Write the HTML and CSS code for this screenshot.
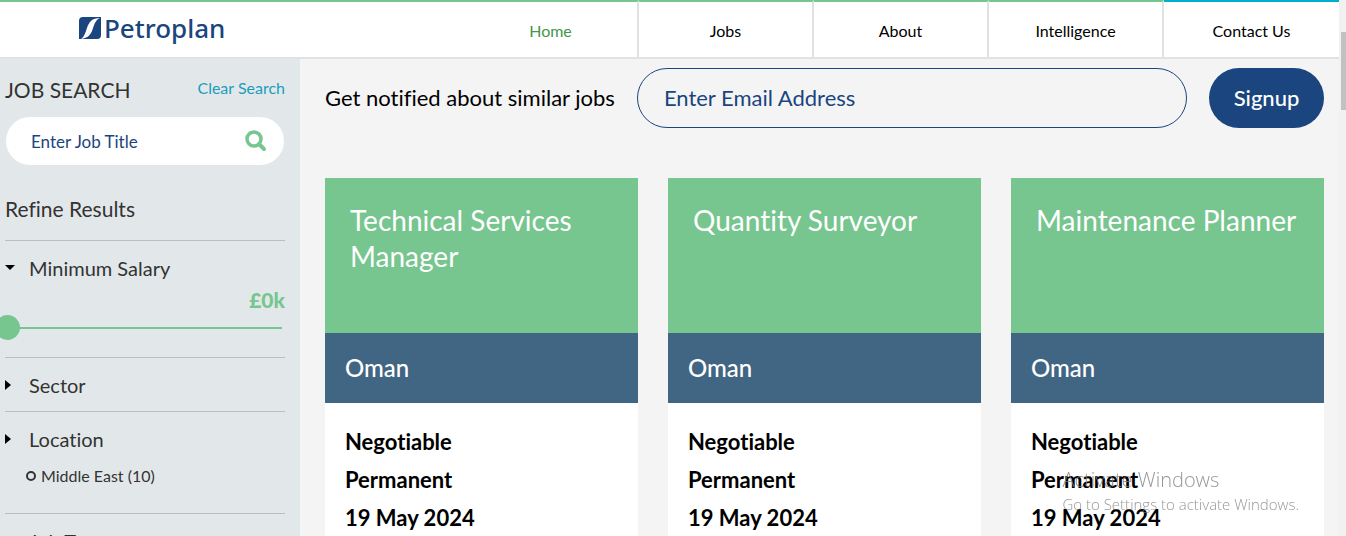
FILE: index.html
```html
<!DOCTYPE html>
<html lang="en">
<head>
    <meta charset="UTF-8">
    <meta name="viewport" content="width=device-width, initial-scale=1.0">
    <title>Petroplan - Jobs</title>
    <link rel="stylesheet" href="styles.css">
</head>
<body>
    <div class="page">
        <header>
            <a href="#" class="logo">
                <svg width="22" height="22" viewBox="0 0 22 22" aria-hidden="true">
                    <path fill="#1a457e" d="M4 0H22V18Q22 22 18 22H0V4Q0 0 4 0Z"/>
                    <path fill="#fff" d="M21 1C13 1 10 5 8 11C6 17 5 20 2 22C9 21 12 18 14 11C16 5 18 2 21 1Z"/>
                </svg>
                <span>Petroplan</span>
            </a>
            <nav class="nav-bar">
                <a href="#" class="active">Home</a>
                <a href="#">Jobs</a>
                <a href="#">About</a>
                <a href="#">Intelligence</a>
                <a href="#" class="contact">Contact Us</a>
            </nav>
        </header>

        <div class="content">
            <aside class="sidebar">
                <div class="search-head">
                    <h2>JOB SEARCH</h2>
                    <a href="#">Clear Search</a>
                </div>
                <form class="search-box">
                    <input type="text" placeholder="Enter Job Title" aria-label="Enter Job Title">
                    <button type="button" aria-label="Search">
                        <svg width="22" height="22" viewBox="0 0 22 22" fill="none" stroke="#77c58f">
                            <circle cx="9" cy="9" r="7" stroke-width="3.5"/>
                            <path d="M14 14L19 19" stroke-width="4" stroke-linecap="round"/>
                        </svg>
                    </button>
                </form>
                <h3>Refine Results</h3>

                <section class="filter salary">
                    <button type="button" class="toggle open">Minimum Salary</button>
                    <output for="salary">£0k</output>
                    <input type="range" id="salary" min="0" max="200" value="0" aria-label="Minimum Salary">
                </section>
                <section class="filter">
                    <button type="button" class="toggle">Sector</button>
                </section>
                <section class="filter">
                    <button type="button" class="toggle">Location</button>
                    <label class="option">
                        <input type="radio" name="location">
                        Middle East (10)
                    </label>
                </section>
                <section class="filter">
                    <button type="button" class="toggle">Job Type</button>
                </section>
            </aside>

            <main>
                <form class="notify">
                    <label for="email">Get notified about similar jobs</label>
                    <input type="email" id="email" placeholder="Enter Email Address">
                    <button type="button">Signup</button>
                </form>

                <div class="jobs">
                    <article class="job">
                        <h2>Technical Services Manager</h2>
                        <p class="place">Oman</p>
                        <ul>
                            <li>Negotiable</li>
                            <li>Permanent</li>
                            <li>19 May 2024</li>
                        </ul>
                    </article>
                    <article class="job">
                        <h2>Quantity Surveyor</h2>
                        <p class="place">Oman</p>
                        <ul>
                            <li>Negotiable</li>
                            <li>Permanent</li>
                            <li>19 May 2024</li>
                        </ul>
                    </article>
                    <article class="job">
                        <h2>Maintenance Planner</h2>
                        <p class="place">Oman</p>
                        <ul>
                            <li>Negotiable</li>
                            <li>Permanent</li>
                            <li>19 May 2024</li>
                        </ul>
                    </article>
                </div>
            </main>
        </div>
    </div>

    <div class="scrollbar"><div class="thumb"></div></div>

    <div class="watermark">
        <p class="big">Activate Windows</p>
        <p>Go to Settings to activate Windows.</p>
    </div>
</body>
</html>
```
FILE: styles.css
```css
* {
    box-sizing: border-box;
}
body {
    margin: 0;
    display: flex;
    height: 100vh;
    overflow: hidden;
    font-family: Lato, sans-serif;
    font-variant-ligatures: none;
    color: #000;
    background-color: #f4f4f4;
}
h2, h3, p, ul {
    margin: 0;
    padding: 0;
    font-weight: 400;
}
a {
    text-decoration: none;
}
button, input {
    font-family: inherit;
    font-variant-ligatures: none;
    border: none;
    background: none;
    padding: 0;
    margin: 0;
}
.page {
    flex: 1;
    min-width: 0;
    display: flex;
    flex-direction: column;
}

/* header */
header {
    display: flex;
    justify-content: space-between;
    flex-shrink: 0;
    height: 59px;
    background-color: #fff;
    border-bottom: 2px solid #e1e1e1;
}
.logo {
    flex: 1;
    display: flex;
    align-items: center;
    gap: 3px;
    padding: 0 0 4px 79px;
    border-top: 2px solid #77c58f;
    color: #1a457e;
    font-family: "Noto Sans", sans-serif;
    font-size: 26px;
    font-weight: 500;
}
.nav-bar {
    display: flex;
}
.nav-bar a {
    width: 175px;
    display: flex;
    align-items: center;
    justify-content: center;
    padding-top: 2px;
    border-top: 2px solid #77c58f;
    border-right: 2px solid #e1e1e1;
    color: #000;
    font-size: 16px;
}
.nav-bar a.active {
    color: #44964b;
}
.nav-bar a.contact {
    border-top-color: #00afcb;
    border-right: none;
}

/* sidebar */
.content {
    flex: 1;
    min-height: 0;
    display: flex;
}
.sidebar {
    width: 300px;
    flex-shrink: 0;
    padding: 18px 15px 0 5px;
    background-color: #e2e8ea;
    color: #333;
    overflow: hidden;
}
.search-head {
    display: flex;
    justify-content: space-between;
    height: 40px;
}
.search-head h2 {
    font-size: 21px;
    line-height: 26px;
}
.search-head a {
    color: #1b9dbb;
    font-size: 16px;
    line-height: 22px;
}
.search-box {
    display: flex;
    align-items: center;
    height: 48px;
    margin: 0 1px;
    padding: 0 17px 0 25px;
    border-radius: 24px;
    background-color: #fff;
}
.search-box input {
    flex: 1;
    min-width: 0;
    font-size: 17px;
    outline: none;
}
.search-box svg {
    display: block;
}
::placeholder {
    color: #1a457e;
    opacity: 1;
}
.sidebar h3 {
    padding: 30px 0 17px;
    font-size: 21px;
    line-height: 28px;
}
.filter {
    border-top: 1px solid #b7bfc4;
    padding: 14px 0 12px;
}
.toggle {
    display: flex;
    align-items: center;
    width: 100%;
    color: #333;
    font-size: 20px;
    line-height: 27px;
}
.toggle::before {
    content: "";
    width: 0;
    margin: 0 18px 2px 0;
    border-left: 6px solid #000;
    border-top: 5px solid transparent;
    border-bottom: 5px solid transparent;
}
.toggle.open::before {
    margin-right: 14px;
    border-left: 5px solid transparent;
    border-right: 5px solid transparent;
    border-top: 5px solid #000;
    border-bottom: none;
}
.salary {
    padding-bottom: 17px;
}
.salary output {
    display: block;
    padding-top: 2px;
    text-align: right;
    color: #77c58f;
    font-size: 21px;
    font-weight: 900;
    line-height: 31px;
}
.salary input {
    appearance: none;
    display: block;
    width: 287px;
    height: 25px;
    margin-left: -10px;
}
.salary input::-webkit-slider-runnable-track {
    height: 2px;
    background-color: #77c58f;
}
.salary input::-webkit-slider-thumb {
    appearance: none;
    width: 25px;
    height: 25px;
    margin-top: -12px;
    border-radius: 50%;
    background-color: #77c58f;
}
.option {
    display: flex;
    align-items: center;
    gap: 5px;
    padding: 11px 0 13px 21px;
    font-size: 16px;
    line-height: 24px;
}
.option input {
    appearance: none;
    width: 10px;
    height: 10px;
    border: 2px solid #333;
    border-radius: 50%;
}

/* main column */
main {
    flex: 1;
    min-width: 0;
    padding: 9px 15px 0 25px;
}
.notify {
    display: flex;
    align-items: center;
    margin-bottom: 50px;
    font-size: 22px;
}
.notify label {
    padding-bottom: 2px;
}
.notify input {
    flex: 1;
    min-width: 0;
    height: 60px;
    margin: 0 22px;
    padding: 0 26px 2px;
    border: 1px solid #1a457e;
    border-radius: 30px;
    font-size: 22px;
}
.notify button {
    width: 115px;
    height: 60px;
    padding-bottom: 2px;
    border-radius: 30px;
    background-color: #1a457e;
    color: #fff;
    font-size: 22px;
    font-weight: 500;
}
.jobs {
    display: grid;
    grid-template-columns: repeat(3, 1fr);
    gap: 30px;
}
.job {
    background-color: #fff;
}
.job h2 {
    min-height: 155px;
    padding: 24px 25px;
    background-color: #77c58f;
    color: #fff;
    font-size: 28px;
    line-height: 36px;
}
.job .place {
    padding: 0 20px;
    background-color: #416683;
    color: #fff;
    font-size: 24px;
    font-weight: 500;
    line-height: 70px;
}
.job ul {
    list-style: none;
    padding: 20px;
    font-size: 22px;
    font-weight: 700;
    line-height: 38px;
}

.scrollbar {
    width: 7px;
    flex-shrink: 0;
    padding: 32px 0 0 2px;
    background-color: #f1f1f1;
}
.thumb {
    height: 78px;
    background-color: #c1c1c1;
}

/* overlay text in the corner */
.watermark {
    position: fixed;
    right: 47px;
    bottom: 21px;
    color: rgba(125, 125, 125, 0.8);
    font-family: "Open Sans", sans-serif;
    font-size: 15px;
    line-height: 22px;
    pointer-events: none;
}
.watermark p {
    font-weight: 300;
}
.watermark .big {
    font-size: 20px;
    line-height: 26px;
}
```
